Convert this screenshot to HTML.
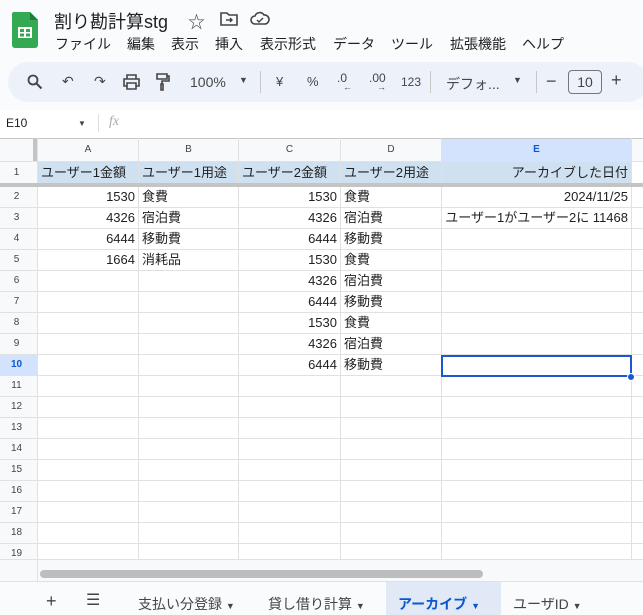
<!DOCTYPE html>
<html><head><meta charset="utf-8"><style>
*{box-sizing:border-box;margin:0;padding:0}
body{width:643px;height:615px;overflow:hidden;background:#f9fbfd;font-family:"Liberation Sans","Noto Sans CJK JP",sans-serif;color:#1f1f1f;position:relative}
.a{position:absolute}
.menu span{position:absolute;white-space:nowrap}
.tb{position:absolute;top:62px;left:8px;width:640px;height:40px;background:#edf2fa;border-radius:20px}
.ic{position:absolute;font-size:14px;color:#444746;top:73px}
.grid{position:absolute;left:0;top:138px;width:643px;height:421px;background:#fff;overflow:hidden}
.vl{position:absolute;top:0;bottom:0;width:1px;background:#e1e1e1}
.hl{position:absolute;left:0;right:0;height:1px;background:#e1e1e1}
.c{position:absolute;font-size:13px;line-height:21px;white-space:nowrap}
.r{text-align:right}
.rh{position:absolute;left:0;width:33px;text-align:center;font-size:10px;color:#444;line-height:21px}
.ch{position:absolute;top:0;height:23px;line-height:23px;text-align:center;font-size:10px;color:#444}
</style></head><body>
<svg class="a" style="left:12px;top:12px" width="26" height="36" viewBox="0 0 26 36"><path d="M2 0h16l8 8v25a3 3 0 0 1-3 3H3a3 3 0 0 1-3-3V2a2 2 0 0 1 2-2z" fill="#34a853"/><path d="M18 0v8h8z" fill="#188038"/><rect x="6" y="15" width="14" height="11" fill="#fff"/><rect x="8" y="17" width="4" height="3" fill="#34a853"/><rect x="14" y="17" width="4" height="3" fill="#34a853"/><rect x="8" y="21.5" width="4" height="3" fill="#34a853"/><rect x="14" y="21.5" width="4" height="3" fill="#34a853"/></svg>
<div class="a" style="left:54px;top:8px;font-size:18px">割り勘計算stg</div>
<div class="a" style="left:188px;top:8px;font-size:17px;color:#444">☆</div>
<svg class="a" style="left:220px;top:12px" width="18" height="14" viewBox="0 0 18 14"><path d="M1 1h6l2 2h8v10H1z" fill="none" stroke="#444" stroke-width="1.6"/><path d="M6 8h6M10 6l2 2-2 2" fill="none" stroke="#444" stroke-width="1.4"/></svg>
<svg class="a" style="left:250px;top:11px" width="20" height="15" viewBox="0 0 20 15"><path d="M5 13a4 4 0 0 1 0-8 5 5 0 0 1 9-1 4 4 0 0 1 1 9z" fill="none" stroke="#444" stroke-width="1.6"/><path d="M7 9l2 2 4-4" fill="none" stroke="#444" stroke-width="1.4"/></svg>
<div class="a menu" style="left:0;top:34px;font-size:14px"><span style="left:55px">ファイル</span><span style="left:127px">編集</span><span style="left:171px">表示</span><span style="left:215px">挿入</span><span style="left:260px">表示形式</span><span style="left:333px">データ</span><span style="left:391px">ツール</span><span style="left:450px">拡張機能</span><span style="left:522px">ヘルプ</span></div>
<div class="tb"></div>
<svg class="a" style="left:27px;top:74px" width="16" height="16" viewBox="0 0 16 16"><circle cx="6" cy="6" r="4.5" fill="none" stroke="#444" stroke-width="1.8"/><path d="M9.5 9.5l5 5" stroke="#444" stroke-width="2"/></svg>
<div class="ic" style="left:62px;top:73px">↶</div>
<div class="ic" style="left:94px;top:73px">↷</div>
<svg class="a" style="left:123px;top:74px" width="17" height="16" viewBox="0 0 17 16"><path d="M4 5V1h9v4M4 12H1V5h15v7h-3M4 9h9v6H4z" fill="none" stroke="#444" stroke-width="1.6"/></svg>
<svg class="a" style="left:156px;top:73px" width="14" height="18" viewBox="0 0 14 18"><path d="M1 1h10v5H1zM11 3h2v5H6v3M5 11h2v6H5z" fill="none" stroke="#444" stroke-width="1.6"/></svg>
<div class="ic" style="left:190px;top:74px">100%</div>
<div class="ic" style="left:239px;top:75px;font-size:9px">▼</div>
<div class="a" style="left:260px;top:71px;width:1px;height:22px;background:#c7c7c7"></div>
<div class="ic" style="left:276px;top:74px;font-size:13px">¥</div>
<div class="ic" style="left:307px;top:74px;font-size:13px">%</div>
<div class="ic" style="left:337px;top:71px;font-size:12px">.0</div><div class="ic" style="left:343px;top:82px;font-size:9px">←</div>
<div class="ic" style="left:369px;top:71px;font-size:12px">.00</div><div class="ic" style="left:377px;top:82px;font-size:9px">→</div>
<div class="ic" style="left:401px;top:75px;font-size:12px">123</div>
<div class="a" style="left:430px;top:71px;width:1px;height:22px;background:#c7c7c7"></div>
<div class="ic" style="left:446px;top:74px">デフォ...</div>
<div class="ic" style="left:513px;top:75px;font-size:9px">▼</div>
<div class="a" style="left:536px;top:71px;width:1px;height:22px;background:#c7c7c7"></div>
<div class="ic" style="left:546px;top:71px;font-size:18px">−</div>
<div class="a" style="left:568px;top:70px;width:34px;height:24px;border:1px solid #747775;border-radius:4px;font-size:14px;text-align:center;line-height:22px;color:#444">10</div>
<div class="ic" style="left:611px;top:70px;font-size:18px">+</div>
<div class="a" style="left:0;top:110px;width:643px;height:28px;background:#fff"></div>
<div class="a" style="left:6px;top:116px;font-size:12px">E10</div>
<div class="a" style="left:78px;top:119px;font-size:8px;color:#444">▼</div>
<div class="a" style="left:98px;top:114px;width:1px;height:18px;background:#ddd"></div>
<div class="a" style="left:109px;top:114px;font-size:14px;color:#aaa;font-style:italic;font-family:'Liberation Serif',serif">fx</div>
<div class="grid">
  <div class="a" style="left:0;top:0;width:643px;height:1px;background:#c4c7c5"></div>
  <div class="a" style="left:0;top:1px;width:643px;height:22px;background:#f8f9fa"></div>
  <div class="a" style="left:442px;top:1px;width:189px;height:22px;background:#d3e3fd"></div>
  <div class="a" style="left:0;top:23px;width:37px;height:398px;background:#f8f9fa"></div>
  <div class="a" style="left:0;top:216px;width:37px;height:21px;background:#d3e3fd"></div>
  <div class="a" style="left:38px;top:24px;width:593px;height:21px;background:#cfe0f1"></div>
  <div class="a" style="left:33px;top:0;width:4px;height:23px;background:#c4c4c4"></div>
  <div class="vl" style="left:37px"></div><div class="vl" style="left:138px"></div><div class="vl" style="left:238px"></div><div class="vl" style="left:340px"></div><div class="vl" style="left:441px"></div><div class="vl" style="left:631px"></div>
  <div class="hl" style="top:23px"></div>
  <div class="a" style="left:0;top:45px;width:643px;height:4px;background:#c4c4c4"></div>
  <div class="hl" style="top:69px"></div><div class="hl" style="top:90px"></div><div class="hl" style="top:111px"></div><div class="hl" style="top:132px"></div><div class="hl" style="top:153px"></div><div class="hl" style="top:174px"></div><div class="hl" style="top:195px"></div><div class="hl" style="top:216px"></div><div class="hl" style="top:237px"></div><div class="hl" style="top:258px"></div><div class="hl" style="top:279px"></div><div class="hl" style="top:300px"></div><div class="hl" style="top:321px"></div><div class="hl" style="top:342px"></div><div class="hl" style="top:363px"></div><div class="hl" style="top:384px"></div><div class="hl" style="top:405px"></div>
  <div class="ch" style="left:38px;width:100px">A</div><div class="ch" style="left:139px;width:99px">B</div><div class="ch" style="left:239px;width:101px">C</div><div class="ch" style="left:341px;width:100px">D</div><div class="ch" style="left:442px;width:189px;font-weight:bold;color:#0b57d0">E</div>
  <div class="rh" style="top:24px">1</div><div class="rh" style="top:48px">2</div><div class="rh" style="top:69px">3</div><div class="rh" style="top:90px">4</div><div class="rh" style="top:111px">5</div><div class="rh" style="top:132px">6</div><div class="rh" style="top:153px">7</div><div class="rh" style="top:174px">8</div><div class="rh" style="top:195px">9</div><div class="rh" style="top:216px;font-weight:bold;color:#0b57d0">10</div><div class="rh" style="top:237px">11</div><div class="rh" style="top:258px">12</div><div class="rh" style="top:279px">13</div><div class="rh" style="top:300px">14</div><div class="rh" style="top:321px">15</div><div class="rh" style="top:342px">16</div><div class="rh" style="top:363px">17</div><div class="rh" style="top:384px">18</div><div class="rh" style="top:405px">19</div>
  <div class="c" style="left:41px;top:24px">ユーザー1金額</div><div class="c" style="left:142px;top:24px">ユーザー1用途</div><div class="c" style="left:242px;top:24px">ユーザー2金額</div><div class="c" style="left:344px;top:24px">ユーザー2用途</div><div class="c r" style="left:442px;width:186px;top:24px">アーカイブした日付</div>
  <div class="c r" style="left:38px;width:97px;top:48px">1530</div><div class="c" style="left:142px;top:48px">食費</div>
  <div class="c r" style="left:38px;width:97px;top:69px">4326</div><div class="c" style="left:142px;top:69px">宿泊費</div>
  <div class="c r" style="left:38px;width:97px;top:90px">6444</div><div class="c" style="left:142px;top:90px">移動費</div>
  <div class="c r" style="left:38px;width:97px;top:111px">1664</div><div class="c" style="left:142px;top:111px">消耗品</div>
  <div class="c r" style="left:239px;width:98px;top:48px">1530</div><div class="c" style="left:344px;top:48px">食費</div>
  <div class="c r" style="left:239px;width:98px;top:69px">4326</div><div class="c" style="left:344px;top:69px">宿泊費</div>
  <div class="c r" style="left:239px;width:98px;top:90px">6444</div><div class="c" style="left:344px;top:90px">移動費</div>
  <div class="c r" style="left:239px;width:98px;top:111px">1530</div><div class="c" style="left:344px;top:111px">食費</div>
  <div class="c r" style="left:239px;width:98px;top:132px">4326</div><div class="c" style="left:344px;top:132px">宿泊費</div>
  <div class="c r" style="left:239px;width:98px;top:153px">6444</div><div class="c" style="left:344px;top:153px">移動費</div>
  <div class="c r" style="left:239px;width:98px;top:174px">1530</div><div class="c" style="left:344px;top:174px">食費</div>
  <div class="c r" style="left:239px;width:98px;top:195px">4326</div><div class="c" style="left:344px;top:195px">宿泊費</div>
  <div class="c r" style="left:239px;width:98px;top:216px">6444</div><div class="c" style="left:344px;top:216px">移動費</div>
  <div class="c r" style="left:442px;width:186px;top:48px">2024/11/25</div>
  <div class="c r" style="left:442px;width:186px;top:69px;overflow:hidden">ユーザー1がユーザー2に 11468</div>
  <div class="a" style="left:441px;top:217px;width:191px;height:22px;border:2px solid #1a57d0"></div>
  <div class="a" style="left:627px;top:235px;width:8px;height:8px;border-radius:50%;background:#1a57d0;border:1px solid #fff"></div>
</div>
<div class="a" style="left:0;top:559px;width:643px;height:22px;background:#f8f9fa;border-top:1px solid #e1e1e1"></div>
<div class="a" style="left:37px;top:559px;width:1px;height:22px;background:#e1e1e1"></div>
<div class="a" style="left:40px;top:570px;width:443px;height:8px;border-radius:4px;background:#bdbdbd"></div>
<div class="a" style="left:0;top:581px;width:643px;height:1px;background:#e1e1e1"></div>
<div class="a" style="left:386px;top:582px;width:115px;height:33px;background:#e1e9f7"></div>
<div class="a" style="left:46px;top:591px;font-size:18px;color:#444">+</div>
<div class="a" style="left:86px;top:590px;font-size:16px;color:#444">☰</div>
<div class="a" style="left:138px;top:594px;font-size:14px;color:#444">支払い分登録 <span style="font-size:9px">▼</span></div>
<div class="a" style="left:268px;top:594px;font-size:14px;color:#444">貸し借り計算 <span style="font-size:9px">▼</span></div>
<div class="a" style="left:398px;top:594px;font-size:14px;color:#0b57d0;font-weight:bold">アーカイブ <span style="font-size:9px">▼</span></div>
<div class="a" style="left:513px;top:594px;font-size:14px;color:#444">ユーザID <span style="font-size:9px">▼</span></div>
</body></html>
